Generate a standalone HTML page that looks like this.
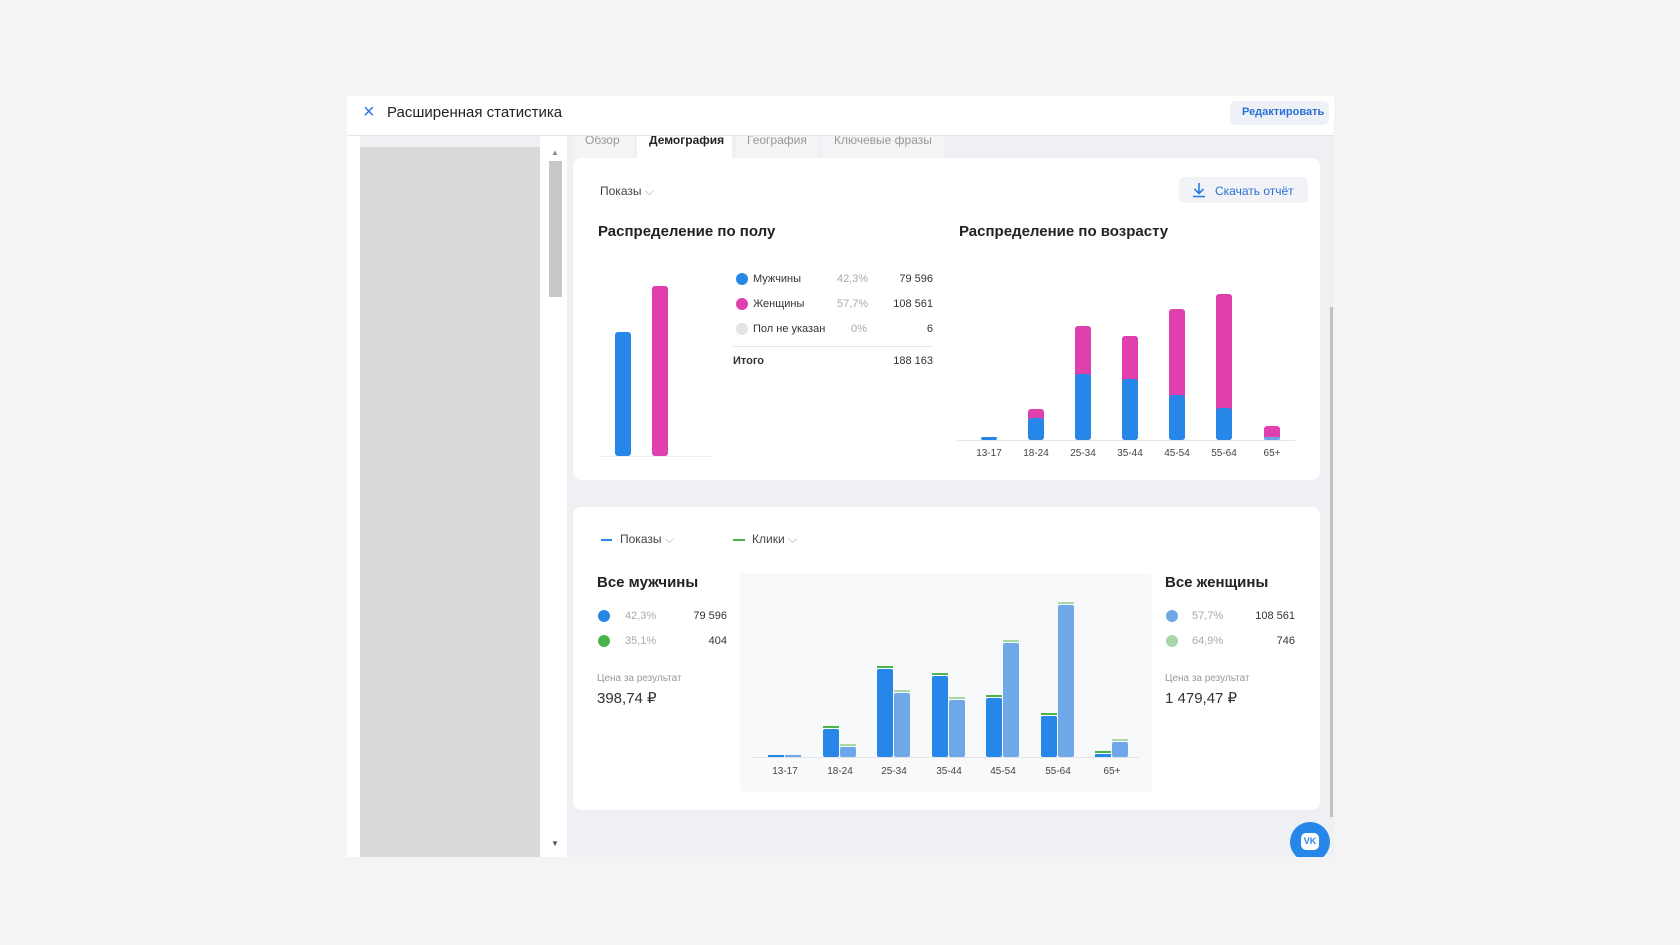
<!DOCTYPE html>
<html><head><meta charset="utf-8">
<style>
*{margin:0;padding:0;box-sizing:border-box}
body{width:1680px;height:945px;background:#f4f4f5;font-family:"Liberation Sans",sans-serif;position:relative;overflow:hidden;color:#222}
.a{position:absolute}
.t{position:absolute;white-space:nowrap}
.card{position:absolute;background:#fff;border-radius:8px}
.bar{position:absolute;border-radius:3px}
.dot{position:absolute;width:12px;height:12px;border-radius:50%}
.lbl{font-size:11px;color:#333}
.g{color:#aaa}
.ax{font-size:10px;color:#444;text-align:center;width:40px}
</style></head><body>
<div class="a" style="left:347px;top:96px;width:987px;height:761px;background:#eef0f3"></div>
<div class="a" style="left:347px;top:136px;width:13px;height:721px;background:#fff"></div>
<div class="a" style="left:360px;top:147px;width:180px;height:710px;background:#d9d9d9"></div>
<div class="a" style="left:540px;top:136px;width:27px;height:721px;background:#fff"></div>
<div class="a" style="left:549px;top:161px;width:13px;height:136px;background:#c8c8c8"></div>
<div class="t" style="left:551px;top:148px;font-size:8px;color:#888">▲</div>
<div class="t" style="left:551px;top:839px;font-size:8px;color:#555">▼</div>
<div class="a" style="left:1330px;top:307px;width:3px;height:510px;background:#c0c0c0"></div>

<!-- tabs -->
<div class="a" style="left:573px;top:130px;width:61px;height:28px;background:#f3f4f6"></div>
<div class="a" style="left:637px;top:130px;width:95px;height:30px;background:#fff"></div>
<div class="a" style="left:736px;top:130px;width:82px;height:28px;background:#f3f4f6"></div>
<div class="a" style="left:822px;top:130px;width:122px;height:28px;background:#f3f4f6"></div>
<div class="t" style="left:585px;top:133px;font-size:12px;color:#999">Обзор</div>
<div class="t" style="left:649px;top:133px;font-size:12px;color:#222;font-weight:bold">Демография</div>
<div class="t" style="left:747px;top:133px;font-size:12px;color:#999">География</div>
<div class="t" style="left:834px;top:133px;font-size:12px;color:#999">Ключевые фразы</div>

<!-- header -->
<div class="a" style="left:347px;top:96px;width:987px;height:40px;background:#fff;border-bottom:1px solid #e6e6e6"></div>
<div class="t" style="left:363px;top:101px;font-size:20px;color:#2a7be4">×</div>
<div class="t" style="left:387px;top:104px;font-size:15px;color:#222">Расширенная статистика</div>
<div class="a" style="left:1230px;top:101px;width:99px;height:24px;background:#eef2f7;border-radius:5px"></div>
<div class="t" style="left:1242px;top:106px;font-size:11px;color:#2a6fd6;font-weight:bold">Редактировать</div>

<!-- card 1 -->
<div class="card" style="left:573px;top:158px;width:747px;height:322px"></div>
<div class="t" style="left:600px;top:184px;font-size:12px;color:#444">Показы <span style="color:#aaa">⌵</span></div>
<div class="a" style="left:1179px;top:177px;width:129px;height:26px;background:#f1f3f6;border-radius:5px"></div>
<svg class="a" style="left:1192px;top:182px" width="14" height="16" viewBox="0 0 14 16"><path d="M7 1v10M2.5 7L7 11.5 11.5 7M1 14.5h12" stroke="#2a7be4" stroke-width="1.6" fill="none"/></svg>
<div class="t" style="left:1215px;top:184px;font-size:12px;color:#2a6fd6">Скачать отчёт</div>
<div class="t" style="left:598px;top:223px;font-size:15px;font-weight:bold;color:#222">Распределение по полу</div>
<div class="t" style="left:959px;top:223px;font-size:15px;font-weight:bold;color:#222">Распределение по возрасту</div>
<div class="bar" style="left:615px;top:332px;width:16px;height:124px;background:#2787e8"></div>
<div class="bar" style="left:652px;top:286px;width:16px;height:170px;background:#e03fae"></div>
<div class="a" style="left:599px;top:456px;width:114px;height:1px;background:#eee"></div>
<div class="dot" style="left:736px;top:273px;background:#2787e8"></div>
<div class="dot" style="left:736px;top:298px;background:#e03fae"></div>
<div class="dot" style="left:736px;top:323px;background:#e4e4e4"></div>
<div class="t lbl" style="left:753px;top:273px">Мужчины</div>
<div class="t lbl" style="left:753px;top:298px">Женщины</div>
<div class="t lbl" style="left:753px;top:323px">Пол не указан</div>
<div class="t lbl g" style="left:837px;top:273px">42,3%</div>
<div class="t lbl g" style="left:837px;top:298px">57,7%</div>
<div class="t lbl g" style="left:851px;top:323px">0%</div>
<div class="t lbl" style="right:747px;top:273px">79 596</div>
<div class="t lbl" style="right:747px;top:298px">108 561</div>
<div class="t lbl" style="right:747px;top:323px">6</div>
<div class="a" style="left:733px;top:346px;width:200px;height:1px;background:#e6e6e6"></div>
<div class="t lbl" style="left:733px;top:355px;font-weight:bold">Итого</div>
<div class="t lbl" style="right:747px;top:355px">188 163</div>

<div class="a" style="left:957px;top:440px;width:338px;height:1px;background:#e6e6e6"></div>
<div class="bar" style="left:981px;top:437px;width:16px;height:3px;background:#2787e8"></div>
<div class="bar" style="left:1028px;top:409px;width:16px;height:31px;background:#e03fae"></div><div class="bar" style="left:1028px;top:418px;width:16px;height:22px;background:#2787e8"></div>
<div class="bar" style="left:1075px;top:326px;width:16px;height:114px;background:#e03fae"></div><div class="bar" style="left:1075px;top:374px;width:16px;height:66px;background:#2787e8"></div>
<div class="bar" style="left:1122px;top:336px;width:16px;height:104px;background:#e03fae"></div><div class="bar" style="left:1122px;top:379px;width:16px;height:61px;background:#2787e8"></div>
<div class="bar" style="left:1169px;top:309px;width:16px;height:131px;background:#e03fae"></div><div class="bar" style="left:1169px;top:395px;width:16px;height:45px;background:#2787e8"></div>
<div class="bar" style="left:1216px;top:294px;width:16px;height:146px;background:#e03fae"></div><div class="bar" style="left:1216px;top:408px;width:16px;height:32px;background:#2787e8"></div>
<div class="bar" style="left:1264px;top:426px;width:16px;height:14px;background:#e03fae"></div><div class="bar" style="left:1264px;top:437px;width:16px;height:3px;background:#6fa8e8"></div>
<div class="t ax" style="left:969px;top:448px">13-17</div>
<div class="t ax" style="left:1016px;top:448px">18-24</div>
<div class="t ax" style="left:1063px;top:448px">25-34</div>
<div class="t ax" style="left:1110px;top:448px">35-44</div>
<div class="t ax" style="left:1157px;top:448px">45-54</div>
<div class="t ax" style="left:1204px;top:448px">55-64</div>
<div class="t ax" style="left:1252px;top:448px">65+</div>

<!-- card 2 -->
<div class="card" style="left:573px;top:507px;width:747px;height:303px"></div>
<div class="a" style="left:601px;top:539px;width:11px;height:2px;background:#2787e8"></div>
<div class="t" style="left:620px;top:532px;font-size:12px;color:#444">Показы <span style="color:#aaa">⌵</span></div>
<div class="a" style="left:733px;top:539px;width:12px;height:2px;background:#4bb34b"></div>
<div class="t" style="left:752px;top:532px;font-size:12px;color:#444">Клики <span style="color:#aaa">⌵</span></div>
<div class="t" style="left:597px;top:574px;font-size:15px;font-weight:bold">Все мужчины</div>
<div class="dot" style="left:598px;top:610px;background:#2787e8"></div>
<div class="dot" style="left:598px;top:635px;background:#4bb34b"></div>
<div class="t lbl g" style="left:625px;top:610px">42,3%</div>
<div class="t lbl g" style="left:625px;top:635px">35,1%</div>
<div class="t lbl" style="right:953px;top:610px">79 596</div>
<div class="t lbl" style="right:953px;top:635px">404</div>
<div class="t" style="left:597px;top:673px;font-size:10px;color:#999">Цена за результат</div>
<div class="t" style="left:597px;top:689px;font-size:15px;color:#333">398,74 ₽</div>

<div class="t" style="left:1165px;top:574px;font-size:15px;font-weight:bold">Все женщины</div>
<div class="dot" style="left:1166px;top:610px;background:#6fa8e8"></div>
<div class="dot" style="left:1166px;top:635px;background:#a8d8a8"></div>
<div class="t lbl g" style="left:1192px;top:610px">57,7%</div>
<div class="t lbl g" style="left:1192px;top:635px">64,9%</div>
<div class="t lbl" style="right:385px;top:610px">108 561</div>
<div class="t lbl" style="right:385px;top:635px">746</div>
<div class="t" style="left:1165px;top:673px;font-size:10px;color:#999">Цена за результат</div>
<div class="t" style="left:1165px;top:689px;font-size:15px;color:#333">1 479,47 ₽</div>

<div class="a" style="left:740px;top:573px;width:412px;height:219px;background:#f8f9fa;border-radius:4px"></div>
<div class="a" style="left:751px;top:757px;width:388px;height:1px;background:#e4e4e4"></div>
<svg class="a" style="left:740px;top:573px" width="412" height="190">
<g fill="#2787e8">
<rect x="28" y="182" width="16" height="2"/>
<rect x="83" y="156" width="16" height="28" rx="2"/>
<rect x="137" y="96" width="16" height="88" rx="2"/>
<rect x="192" y="103" width="16" height="81" rx="2"/>
<rect x="246" y="125" width="16" height="59" rx="2"/>
<rect x="301" y="143" width="16" height="41" rx="2"/>
<rect x="355" y="181" width="16" height="3"/>
</g>
<g fill="#6fa8e8">
<rect x="45" y="182" width="16" height="2"/>
<rect x="100" y="174" width="16" height="10" rx="2"/>
<rect x="154" y="120" width="16" height="64" rx="2"/>
<rect x="209" y="127" width="16" height="57" rx="2"/>
<rect x="263" y="70" width="16" height="114" rx="2"/>
<rect x="318" y="32" width="16" height="152" rx="2"/>
<rect x="372" y="169" width="16" height="15" rx="2"/>
</g>
<g fill="#4bb34b"><rect x="83" y="153" width="16" height="2"/><rect x="137" y="93" width="16" height="2"/><rect x="192" y="100" width="16" height="2"/><rect x="246" y="122" width="16" height="2"/><rect x="301" y="140" width="16" height="2"/><rect x="355" y="178" width="16" height="2"/></g>
<g fill="#a8d8a8"><rect x="100" y="171" width="16" height="2"/><rect x="154" y="117" width="16" height="2"/><rect x="209" y="124" width="16" height="2"/><rect x="263" y="67" width="16" height="2"/><rect x="318" y="29" width="16" height="2"/><rect x="372" y="166" width="16" height="2"/></g>
</svg>
<div class="t ax" style="left:765px;top:766px">13-17</div>
<div class="t ax" style="left:820px;top:766px">18-24</div>
<div class="t ax" style="left:874px;top:766px">25-34</div>
<div class="t ax" style="left:929px;top:766px">35-44</div>
<div class="t ax" style="left:983px;top:766px">45-54</div>
<div class="t ax" style="left:1038px;top:766px">55-64</div>
<div class="t ax" style="left:1092px;top:766px">65+</div>

<div class="a" style="left:1290px;top:822px;width:40px;height:40px;border-radius:50%;background:#2787e8"></div>
<div class="a" style="left:1301px;top:833px;width:18px;height:17px;border-radius:5px;background:#fff;color:#2787e8;font-size:9px;font-weight:bold;text-align:center;line-height:17px">VK</div>
<div class="a" style="left:0;top:857px;width:1680px;height:88px;background:#f4f4f5"></div>
</body></html>
